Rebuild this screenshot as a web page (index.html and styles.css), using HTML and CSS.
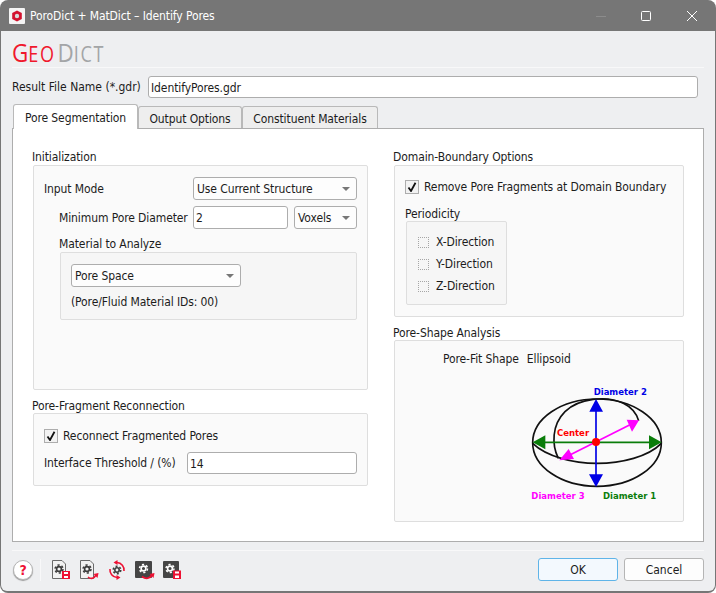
FILE: index.html
```html
<!DOCTYPE html>
<html lang="en">
<head>
    <meta charset="UTF-8">
    <title>PoroDict + MatDict – Identify Pores</title>
    <link rel="stylesheet" href="styles.css">
</head>
<body>
<div class="window">
    <div class="titlebar">
        <svg class="app-icon" width="16" height="16" viewBox="0 0 16 16">
            <rect width="16" height="16" rx="1" fill="#f4f4f4"/>
            <path d="M8 2.5 L12.8 5 V11 L8 13.5 L3.2 11 V5 Z" fill="#d3122e"/>
            <circle cx="8" cy="8" r="2.2" fill="#d9d9d9"/>
        </svg>
        <span class="title">PoroDict + MatDict – Identify Pores</span>
        <div class="win-buttons">
            <svg width="12" height="12" viewBox="0 0 12 12"><path d="M2 6.5 H12" stroke="#8c8c8c"/></svg>
            <svg width="12" height="12" viewBox="0 0 12 12"><rect x="1.5" y="1.5" width="9" height="9" rx="1" fill="none" stroke="#fff"/></svg>
            <svg width="12" height="12" viewBox="0 0 12 12"><path d="M1 1 L11 11 M11 1 L1 11" stroke="#fff"/></svg>
        </div>
    </div>

    <div class="content">
        <div class="logo"><span class="logo-geo">G<small>EO</small></span><span class="logo-dict">D<small>ICT</small></span></div>
        <div class="rule"></div>

        <div class="result-row">
            <label class="result-label">Result File Name (*.gdr)</label>
            <div class="input grow">IdentifyPores.gdr</div>
        </div>

        <div class="tabs">
            <div class="tab active">Pore Segmentation</div>
            <div class="tab tab-output">Output Options</div>
            <div class="tab tab-materials">Constituent Materials</div>
        </div>

        <div class="pane">
            <div class="col">
                <div class="group-title">Initialization</div>
                <div class="group group-init">
                    <div class="row row-mode">
                        <span class="row-label">Input Mode</span>
                        <div class="combo combo-mode">Use Current Structure<i class="arrow"></i></div>
                    </div>
                    <div class="row row-diameter">
                        <span class="row-label">Minimum Pore Diameter</span>
                        <div class="input input-diameter">2</div>
                        <div class="combo combo-unit">Voxels<i class="arrow"></i></div>
                    </div>
                    <div class="sub-title">Material to Analyze</div>
                    <div class="subgroup material">
                        <div class="combo combo-material">Pore Space<i class="arrow"></i></div>
                        <div class="note">(Pore/Fluid Material IDs: 00)</div>
                    </div>
                </div>

                <div class="group-title title-fragment">Pore-Fragment Reconnection</div>
                <div class="group group-fragment">
                    <div class="check-row">
                        <span class="check"><svg width="10" height="10" viewBox="0 0 10 10"><path d="M1.5 5.5 L4 9 L8.5 0.8" fill="none" stroke="#111" stroke-width="1.8"/></svg></span>
                        Reconnect Fragmented Pores
                    </div>
                    <div class="row row-threshold">
                        <span class="row-label">Interface Threshold / (%)</span>
                        <div class="input input-threshold">14</div>
                    </div>
                </div>
            </div>

            <div class="col">
                <div class="group-title">Domain-Boundary Options</div>
                <div class="group group-domain">
                    <div class="check-row">
                        <span class="check"><svg width="10" height="10" viewBox="0 0 10 10"><path d="M1.5 5.5 L4 9 L8.5 0.8" fill="none" stroke="#111" stroke-width="1.8"/></svg></span>
                        Remove Pore Fragments at Domain Boundary
                    </div>
                    <div class="sub-title periodicity-title">Periodicity</div>
                    <div class="subgroup periodicity">
                        <div class="dir"><span class="dir-check"></span>X-Direction</div>
                        <div class="dir"><span class="dir-check"></span>Y-Direction</div>
                        <div class="dir"><span class="dir-check"></span>Z-Direction</div>
                    </div>
                </div>

                <div class="group-title title-shape">Pore-Shape Analysis</div>
                <div class="group group-shape">
                    <div class="shape-row"><span>Pore-Fit Shape</span><span>Ellipsoid</span></div>
                    <svg class="ellipsoid" width="170" height="130" viewBox="0 0 510 390">
                        <g fill="none" stroke="#111" stroke-width="5">
                            <ellipse cx="261" cy="203" rx="193" ry="131"/>
                            <path d="M68 205 C110 245 190 265 261 265 C335 265 415 245 454 205"/>
                            <path d="M145 250 C125 210 125 150 165 110 C205 70 290 60 340 85 C365 97 380 118 386 137"/>
                        </g>
                        <g stroke="#0000e6" fill="#0000e6">
                            <path d="M258 100 V310" stroke-width="5"/>
                            <path d="M258 72 L279 110 H238 Z M258 336 L237 298 H279 Z" stroke="none"/>
                        </g>
                        <g stroke="#0a7d0a" fill="#0a7d0a">
                            <path d="M100 202 H425" stroke-width="5"/>
                            <path d="M68 202 L106 181 V223 Z M455 202 L417 181 V223 Z" stroke="none"/>
                        </g>
                        <g stroke="#ff00ff" fill="#ff00ff">
                            <path d="M175 242 L360 149" stroke-width="5"/>
                            <path d="M148 256 L176 222 L192 252 Z M387 136 L350 134 L366 170 Z" stroke="none"/>
                        </g>
                        <circle cx="258" cy="201" r="12" fill="#ff0000"/>
                        <g class="dia-label">
                            <text x="251" y="61" fill="#0000e6">Diameter 2</text>
                            <text x="141" y="184" fill="#ff0000">Center</text>
                            <text x="64" y="371" fill="#ff00ff">Diameter 3</text>
                            <text x="279" y="371" fill="#0a7d0a">Diameter 1</text>
                        </g>
                    </svg>
                </div>
            </div>
        </div>

        <div class="rule rule-foot"></div>

        <div class="footer">
            <div class="help">?</div>
            <span class="foot-sep"></span>
            <svg class="tool" width="20" height="20" viewBox="0 0 20 20">
                <path d="M1.5 0.5 H11 L14.5 4 V18.5 H1.5 Z" fill="#f2f2f2" stroke="#6a6a6a"/>
                <circle cx="8" cy="9" r="2.4" fill="none" stroke="#3c3c3c" stroke-width="1.6"/>
                <circle cx="8" cy="9" r="4" fill="none" stroke="#3c3c3c" stroke-width="1.5" stroke-dasharray="2.2 2"/>
                <rect x="11" y="11" width="8" height="8" fill="#ee1133"/>
                <rect x="13" y="12" width="4" height="2" fill="#fff"/>
                <rect x="13" y="16" width="4" height="2" fill="#fff"/>
            </svg>
            <svg class="tool" width="20" height="20" viewBox="0 0 20 20">
                <path d="M1.5 0.5 H11 L14.5 4 V18.5 H1.5 Z" fill="#f2f2f2" stroke="#6a6a6a"/>
                <circle cx="8" cy="9" r="2.4" fill="none" stroke="#3c3c3c" stroke-width="1.6"/>
                <circle cx="8" cy="9" r="4" fill="none" stroke="#3c3c3c" stroke-width="1.5" stroke-dasharray="2.2 2"/>
                <path d="M9 17 C12 19.5 15 18.5 17 15" fill="none" stroke="#ee1133" stroke-width="1.6"/>
                <path d="M14.5 14 L19.5 13 L18.5 18 Z" fill="#ee1133"/>
            </svg>
            <svg class="tool" width="20" height="20" viewBox="0 0 20 20">
                <circle cx="10" cy="10" r="2.2" fill="none" stroke="#3c3c3c" stroke-width="1.6"/>
                <circle cx="10" cy="10" r="3.8" fill="none" stroke="#3c3c3c" stroke-width="1.5" stroke-dasharray="2 2"/>
                <path d="M10 2.5 A7.5 7.5 0 0 1 17 11 M10 17.5 A7.5 7.5 0 0 1 3 9" fill="none" stroke="#ee1133" stroke-width="1.6"/>
                <path d="M10.5 0 L6.5 2.5 L10.5 5 Z M9.5 20 L13.5 17.5 L9.5 15 Z" fill="#ee1133"/>
            </svg>
            <svg class="tool" width="20" height="20" viewBox="0 0 20 20">
                <rect x="0" y="1" width="17" height="17" rx="1" fill="#454545"/>
                <circle cx="8.5" cy="8.5" r="2.4" fill="none" stroke="#fff" stroke-width="1.6"/>
                <circle cx="8.5" cy="8.5" r="4" fill="none" stroke="#fff" stroke-width="1.5" stroke-dasharray="2.2 2"/>
                <path d="M7 16.5 C11 19.5 15 18.5 17 15" fill="none" stroke="#ee1133" stroke-width="1.8"/>
                <path d="M14.5 14 L19.5 13 L18.5 18 Z" fill="#ee1133"/>
            </svg>
            <svg class="tool" width="20" height="20" viewBox="0 0 20 20">
                <rect x="0" y="1" width="16" height="17" rx="1" fill="#454545"/>
                <circle cx="7" cy="8.5" r="2.4" fill="none" stroke="#fff" stroke-width="1.6"/>
                <circle cx="7" cy="8.5" r="4" fill="none" stroke="#fff" stroke-width="1.5" stroke-dasharray="2.2 2"/>
                <rect x="10" y="10.5" width="8" height="8.5" fill="#ee1133"/>
                <rect x="12" y="11.5" width="4" height="2" fill="#fff"/>
                <rect x="12" y="15.5" width="4" height="2.5" fill="#fff"/>
            </svg>
            <div class="foot-buttons">
                <button class="btn btn-ok">OK</button>
                <button class="btn btn-cancel">Cancel</button>
            </div>
        </div>
    </div>
</div>
</body>
</html>
```

FILE: styles.css
```css
html, body {
    margin: 0;
    height: 100%;
    background: #fff;
}

body {
    font-family: "DejaVu Sans Condensed", "DejaVu Sans", sans-serif;
    font-stretch: condensed;
    font-size: 12px;
    letter-spacing: -0.1px;
    color: #1c1c1c;
}

.window {
    height: 593px;
    box-sizing: border-box;
    display: flex;
    flex-direction: column;
    background: #767676;
    border-radius: 8px;
    overflow: hidden;
}

.titlebar {
    height: 31px;
    flex: none;
    display: flex;
    align-items: center;
    padding-left: 9px;
    color: #fff;
}

.app-icon {
    margin-right: 5px;
}

.win-buttons {
    margin-left: auto;
    display: flex;
    align-items: center;
    gap: 34px;
    margin-right: 18px;
}

.content {
    flex: 1;
    margin: 0 1px 2px 1px;
    background: #eeeff1;
    border-radius: 0 0 6px 6px;
    padding: 0 11px;
    display: flex;
    flex-direction: column;
}

.logo {
    height: 36px;
    line-height: 42px;
    font-family: "Open Sans", sans-serif;
    font-stretch: normal;
    font-size: 26px;
    letter-spacing: 0;
    transform: scaleX(0.86);
    transform-origin: left center;
}

.logo small {
    font-size: 21px;
    letter-spacing: 2px;
}

.logo-geo {
    color: #f0182d;
}

.logo-dict {
    color: #a3a5a7;
    margin-left: 2px;
}

.rule {
    height: 1px;
    background: #f8f8f9;
}

.result-row {
    display: flex;
    align-items: center;
    gap: 6px;
    margin-top: 8px;
    margin-right: 6px;
}

.result-label {
    width: 130px;
    white-space: nowrap;
    letter-spacing: 0;
}

.input {
    height: 22px;
    box-sizing: border-box;
    background: #fff;
    border: 1px solid #adadad;
    border-radius: 3px;
    padding-left: 2px;
    line-height: 22px;
}

.grow {
    flex: 1;
}

.tabs {
    display: flex;
    margin-top: 6px;
    padding-left: 1px;
    height: 24px;
    align-items: flex-start;
    position: relative;
    z-index: 1;
}

.tab {
    height: 22px;
    margin-top: 2px;
    box-sizing: border-box;
    border: 1px solid #b9b9b9;
    border-bottom: none;
    border-radius: 3px 3px 0 0;
    background: #eeeeee;
    line-height: 24px;
    text-align: center;
}

.tab.active {
    width: 125px;
    height: 25px;
    margin-top: 0;
    background: #fff;
    line-height: 26px;
}

.tab-output {
    width: 104px;
}

.tab-materials {
    width: 136px;
}

.pane {
    height: 414px;
    box-sizing: border-box;
    background: #fff;
    border: 1px solid #adadad;
    display: grid;
    grid-template-columns: 335px 290px;
    column-gap: 26px;
    padding: 18px 0 0 20px;
}

.col {
    display: flex;
    flex-direction: column;
}

.group-title {
    height: 18px;
    line-height: 20px;
    margin-left: -1px;
}

.title-fragment {
    margin-top: 6px;
    height: 17px;
}

.title-shape {
    margin-top: 6px;
    height: 17px;
}

.group {
    box-sizing: border-box;
    background: #fafafa;
    border: 1px solid #dedede;
    border-radius: 2px;
}

.group-init {
    height: 225px;
    padding: 11px 10px 0 10px;
}

.row {
    display: flex;
    align-items: center;
}

.row-mode {
    height: 23px;
}

.combo {
    height: 23px;
    box-sizing: border-box;
    background: #fdfdfd;
    border: 1px solid #adadad;
    border-radius: 3px;
    padding-left: 3px;
    line-height: 23px;
    position: relative;
}

.arrow {
    position: absolute;
    right: 6px;
    top: 9px;
    width: 0;
    height: 0;
    border-left: 4px solid transparent;
    border-right: 4px solid transparent;
    border-top: 4px solid #777;
}

.row-label {
    white-space: nowrap;
}

.combo-mode {
    width: 164px;
    margin-left: auto;
}

.row-diameter {
    margin-top: 6px;
    margin-left: 15px;
    height: 23px;
}

.input-diameter {
    width: 95px;
    height: 23px;
    margin-left: auto;
    line-height: 22px;
}

.combo-unit {
    width: 63px;
    margin-left: 6px;
}

.sub-title {
    margin-left: 15px;
    margin-top: 6px;
    height: 17px;
    line-height: 19px;
}

.subgroup {
    box-sizing: border-box;
    background: #f6f6f6;
    border: 1px solid #dedede;
    border-radius: 2px;
}

.material {
    margin-left: 16px;
    height: 68px;
    padding: 11px 0 0 10px;
}

.combo-material {
    width: 170px;
}

.note {
    margin-top: 6px;
    line-height: 19px;
}

.group-fragment {
    height: 73px;
    padding: 14px 10px 0 10px;
}

.check-row {
    display: flex;
    align-items: center;
    gap: 5px;
    height: 15px;
    white-space: nowrap;
}

.check {
    width: 14px;
    height: 14px;
    box-sizing: border-box;
    border: 1px solid #adadad;
    background: #f2f2f2;
    display: flex;
    align-items: center;
    justify-content: center;
}

.row-threshold {
    margin-top: 8px;
    line-height: 24px;
}

.input-threshold {
    width: 170px;
    margin-left: auto;
    line-height: 22px;
}

.group-domain {
    height: 152px;
    padding: 13px 10px 0 10px;
}

.periodicity-title {
    margin: 11px 0 0 0;
    height: 16px;
    line-height: 19px;
}

.periodicity {
    width: 101px;
    height: 84px;
    margin-left: 1px;
    padding: 9px 0 0 11px;
}

.dir {
    height: 22px;
    display: flex;
    align-items: center;
    gap: 7px;
    line-height: 24px;
}

.dir-check {
    width: 11px;
    height: 11px;
    box-sizing: border-box;
    border: 1px dotted #a6a6a6;
}

.group-shape {
    height: 182px;
    padding: 10px 0 0 48px;
}

.shape-row {
    display: flex;
    gap: 8px;
    height: 17px;
    line-height: 17px;
}

.ellipsoid {
    display: block;
    margin: 7px 0 0 67px;
}

.dia-label {
    font-family: "DejaVu Sans", sans-serif;
    font-stretch: normal;
    font-weight: bold;
    font-size: 25.5px;
    letter-spacing: 0;
}

.rule-foot {
    margin-top: 8px;
}

.footer {
    display: flex;
    align-items: center;
    height: 37px;
}

.help {
    width: 20px;
    height: 20px;
    box-sizing: border-box;
    margin-left: 1px;
    border: 1px solid #b5b5b5;
    border-radius: 50%;
    background: #fff;
    color: #ee1133;
    font-weight: bold;
    font-size: 14px;
    line-height: 18px;
    text-align: center;
    box-shadow: 0 1px 1px #999;
}

.foot-sep {
    width: 1px;
    height: 22px;
    background: #f8f8f9;
    margin: 0 10px 0 7px;
}

.tool {
    margin-right: 8px;
}

.foot-buttons {
    margin-left: auto;
    display: flex;
    gap: 6px;
}

.btn {
    width: 80px;
    height: 23px;
    padding: 0;
    font: inherit;
    color: #1c1c1c;
    border-radius: 3px;
    background: #fdfdfd;
    border: 1px solid #b5b5b5;
}

.btn-ok {
    background: #f3f9fe;
    border-color: #5fb4e8;
}
```
